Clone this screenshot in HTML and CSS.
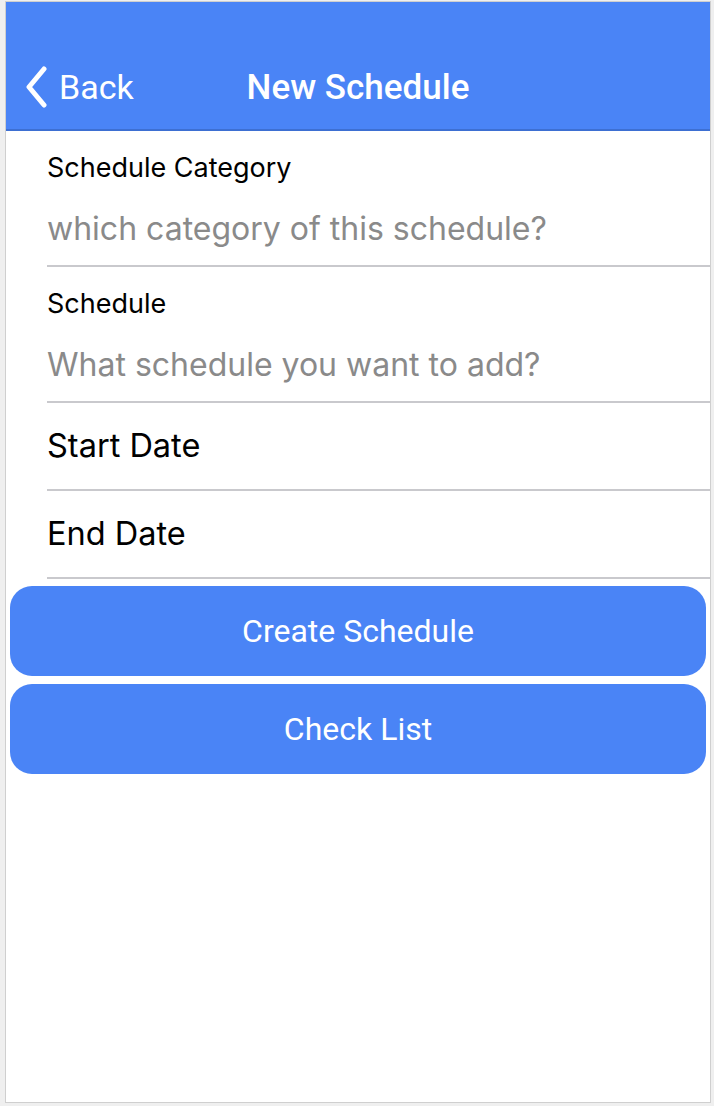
FILE: index.html
```html
<!DOCTYPE html>
<html>
<head>
<meta charset="utf-8">
<link rel="stylesheet" href="styles.css">
</head>
<body>
<div class="frame">
  <header class="navbar">
    <div class="nav-row">
      <div class="back">
        <svg class="chev" width="24" height="42" viewBox="0 0 24 42"><path d="M20 3 L5 21 L20 39" fill="none" stroke="#fff" stroke-width="5" stroke-linecap="round" stroke-linejoin="round"/></svg>
        <span>Back</span>
      </div>
      <div class="title">New Schedule</div>
      <div></div>
    </div>
  </header>
  <div class="form">
    <div class="field">
      <div class="label">Schedule Category</div>
      <div class="placeholder">which category of this schedule?</div>
    </div>
    <div class="field">
      <div class="label">Schedule</div>
      <div class="placeholder">What schedule you want to add?</div>
    </div>
    <div class="row">Start Date</div>
    <div class="row">End Date</div>
  </div>
  <div class="actions">
    <div class="btn">Create Schedule</div>
    <div class="btn">Check List</div>
  </div>
</div>
</body>
</html>
```
FILE: styles.css
```css
html, body { margin: 0; padding: 0; }
body { background: #efefef; height: 1106px; overflow: hidden; }
.frame {
  margin: 1px 3px 0 5px;
  height: 1100px;
  border: 1px solid #cfcfcf;
  background: #fff;
  box-sizing: content-box;
}
.navbar {
  background: #4a84f6;
  border-bottom: 2px solid #3d6fd2;
  padding: 62px 0 19px;
  font-family: Roboto, "Liberation Sans", sans-serif;
  color: #fff;
}
.nav-row {
  display: grid;
  grid-template-columns: 1fr auto 1fr;
  align-items: center;
  height: 46px;
}
.back {
  display: flex;
  align-items: center;
  padding-left: 18px;
  font-size: 34px;
  font-weight: 400;
}
.back .chev { margin-right: 11px; }
.title {
  font-size: 35px;
  font-weight: 500;
}
.form {
  padding-left: 41px;
  font-family: Inter, "Liberation Sans", sans-serif;
}
.field {
  padding: 22px 0 16px;
  border-bottom: 2px solid #c9c9cd;
}
.label {
  font-size: 27px;
  line-height: 30px;
  color: #000;
}
.placeholder {
  margin-top: 26px;
  font-size: 32px;
  line-height: 40px;
  color: #8a8a8a;
}
.row {
  padding: 23px 0;
  font-size: 32.5px;
  line-height: 40px;
  color: #000;
  border-bottom: 2px solid #c9c9cd;
}
.actions {
  display: flex;
  flex-direction: column;
  gap: 8px;
  padding: 7px 4px 0;
}
.btn {
  height: 90px;
  border-radius: 22px;
  background: #4a84f6;
  color: #fff;
  display: flex;
  align-items: center;
  justify-content: center;
  font-family: Roboto, "Liberation Sans", sans-serif;
  font-size: 32px;
}
```
